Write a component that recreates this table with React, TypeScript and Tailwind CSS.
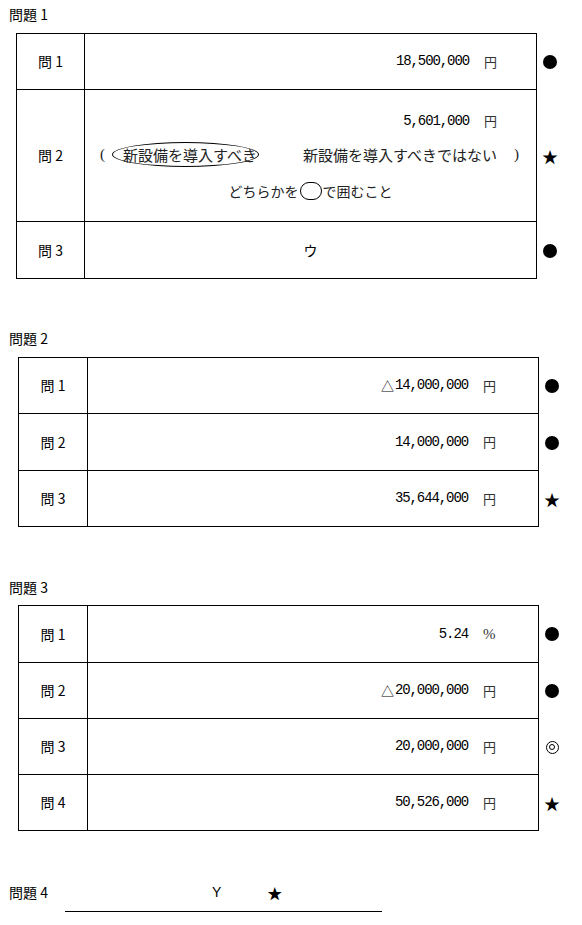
import React from "react";

type MarkType = "dot" | "star" | "double";

function Mark({ type }: { type: MarkType }) {
  if (type === "dot") return <span className="block w-[14px] h-[14px] rounded-full bg-black" />;
  if (type === "star") return <span className="text-[16px] leading-none">★</span>;
  return (
    <span className="flex items-center justify-center w-[13px] h-[13px] rounded-full border-[1.5px] border-black">
      <span className="block w-[6px] h-[6px] rounded-full border-[1.5px] border-black" />
    </span>
  );
}

function Num({ value }: { value: string }) {
  const tri = value.startsWith("△");
  const v = tri ? value.slice(1) : value;
  return (
    <span className="flex items-center">
      {tri && <span className="text-[13px] leading-none mr-[1px] text-black">△</span>}
      <span className="font-['Liberation_Mono',monospace] text-[14px] tracking-[-1.1px] text-black">{v}</span>
    </span>
  );
}

function Amount({ value, unit, pr }: { value: string; unit: string; pr: string }) {
  return (
    <div className={`flex-1 flex items-center justify-end ${pr}`}>
      <Num value={value} />
      {unit === "%" ? (
        <span className="ml-[15px] w-[13px] font-['Liberation_Serif',serif] text-[15px] text-[#333]">%</span>
      ) : (
        <span className="ml-[15px] text-[13px] text-[#333]">{unit}</span>
      )}
    </div>
  );
}

type Row = { label: string; h: string; content: React.ReactNode; mark: MarkType };

function Table({ ml, w, labelW, markW, rows }: { ml: string; w: string; labelW: string; markW: string; rows: Row[] }) {
  return (
    <div className={`flex flex-col ${ml}`}>
      {rows.map((r, i) => (
        <div key={i} className={`flex ${r.h}`}>
          <div className={`flex ${w} border-x border-b border-black ${i === 0 ? "border-t" : ""}`}>
            <div className={`${labelW} shrink-0 border-r border-black flex items-center justify-center text-[14px] text-black`}>
              {r.label}
            </div>
            {r.content}
          </div>
          <div className={`${markW} flex items-center justify-center`}>
            <Mark type={r.mark} />
          </div>
        </div>
      ))}
    </div>
  );
}

export default function App() {
  const t1: Row[] = [
    { label: "問 1", h: "h-[57px]", content: <Amount value="18,500,000" unit="円" pr="pr-[39px]" />, mark: "dot" },
    {
      label: "問 2",
      h: "h-[132px]",
      content: (
        <div className="flex-1 flex flex-col">
          <div className="h-[30px] mt-[16px] flex items-center justify-end pr-[39px]">
            <Num value="5,601,000" />
            <span className="ml-[15px] text-[13px] text-[#333]">円</span>
          </div>
          <div className="h-[30px] mt-[3px] flex items-center text-[15px] text-[#222]">
            <span className="ml-[15px] font-['Liberation_Serif',serif] text-[15px]">(</span>
            <span className="relative ml-[18px] w-[135px] whitespace-nowrap leading-none">
              新設備を導入すべき
              <span className="absolute left-[-11px] right-[-1px] top-[-5px] bottom-[-5px] rounded-[50%] border border-black" />
            </span>
            <span className="ml-[45px] w-[195px] whitespace-nowrap leading-none">新設備を導入すべきではない</span>
            <span className="ml-[16px] font-['Liberation_Serif',serif] text-[15px]">)</span>
          </div>
          <div className="h-[20px] mt-[12px] flex items-center justify-center text-[14px] text-[#222] leading-none">
            <span>どちらかを</span>
            <span className="inline-block w-[22px] h-[18px] rounded-full border border-black mx-[1px]" />
            <span>で囲むこと</span>
          </div>
        </div>
      ),
      mark: "star",
    },
    {
      label: "問 3",
      h: "h-[57px]",
      content: <div className="flex-1 flex items-center justify-center text-[14px] text-black">ウ</div>,
      mark: "dot",
    },
  ];

  const t2: Row[] = [
    { label: "問 1", h: "h-[57px]", content: <Amount value="△14,000,000" unit="円" pr="pr-[42px]" />, mark: "dot" },
    { label: "問 2", h: "h-[57px]", content: <Amount value="14,000,000" unit="円" pr="pr-[42px]" />, mark: "dot" },
    { label: "問 3", h: "h-[56px]", content: <Amount value="35,644,000" unit="円" pr="pr-[42px]" />, mark: "star" },
  ];

  const t3: Row[] = [
    { label: "問 1", h: "h-[58px]", content: <Amount value="5.24" unit="%" pr="pr-[42px]" />, mark: "dot" },
    { label: "問 2", h: "h-[56px]", content: <Amount value="△20,000,000" unit="円" pr="pr-[42px]" />, mark: "dot" },
    { label: "問 3", h: "h-[56px]", content: <Amount value="20,000,000" unit="円" pr="pr-[42px]" />, mark: "double" },
    { label: "問 4", h: "h-[56px]", content: <Amount value="50,526,000" unit="円" pr="pr-[42px]" />, mark: "star" },
  ];

  return (
    <div className="w-[582px] h-[925px] bg-white text-black font-['Noto_Sans_CJK_JP',sans-serif] overflow-hidden">
      <div className="h-[33px] pl-[9px] pt-[7px] text-[14px] leading-[14px]">問題 1</div>
      <Table ml="ml-[16px]" w="w-[521px]" labelW="w-[68px]" markW="w-[26px]" rows={t1} />

      <div className="h-[78px] pl-[9px] pt-[52px] text-[14px] leading-[14px]">問題 2</div>
      <Table ml="ml-[18px]" w="w-[521px]" labelW="w-[69px]" markW="w-[26px]" rows={t2} />

      <div className="h-[78px] pl-[9px] pt-[53px] text-[14px] leading-[14px]">問題 3</div>
      <Table ml="ml-[18px]" w="w-[521px]" labelW="w-[69px]" markW="w-[26px]" rows={t3} />

      <div className="pt-[54px] pl-[9px] flex items-center h-[68px] text-[14px] leading-[14px]">
        <span>問題 4</span>
        <span className="ml-[164px] font-['Liberation_Sans',sans-serif] text-[14px]">Y</span>
        <span className="ml-[46px] text-[15px] leading-none">★</span>
      </div>
      <div className="ml-[65px] mt-[12px] w-[317px] h-px bg-black" />
    </div>
  );
}
